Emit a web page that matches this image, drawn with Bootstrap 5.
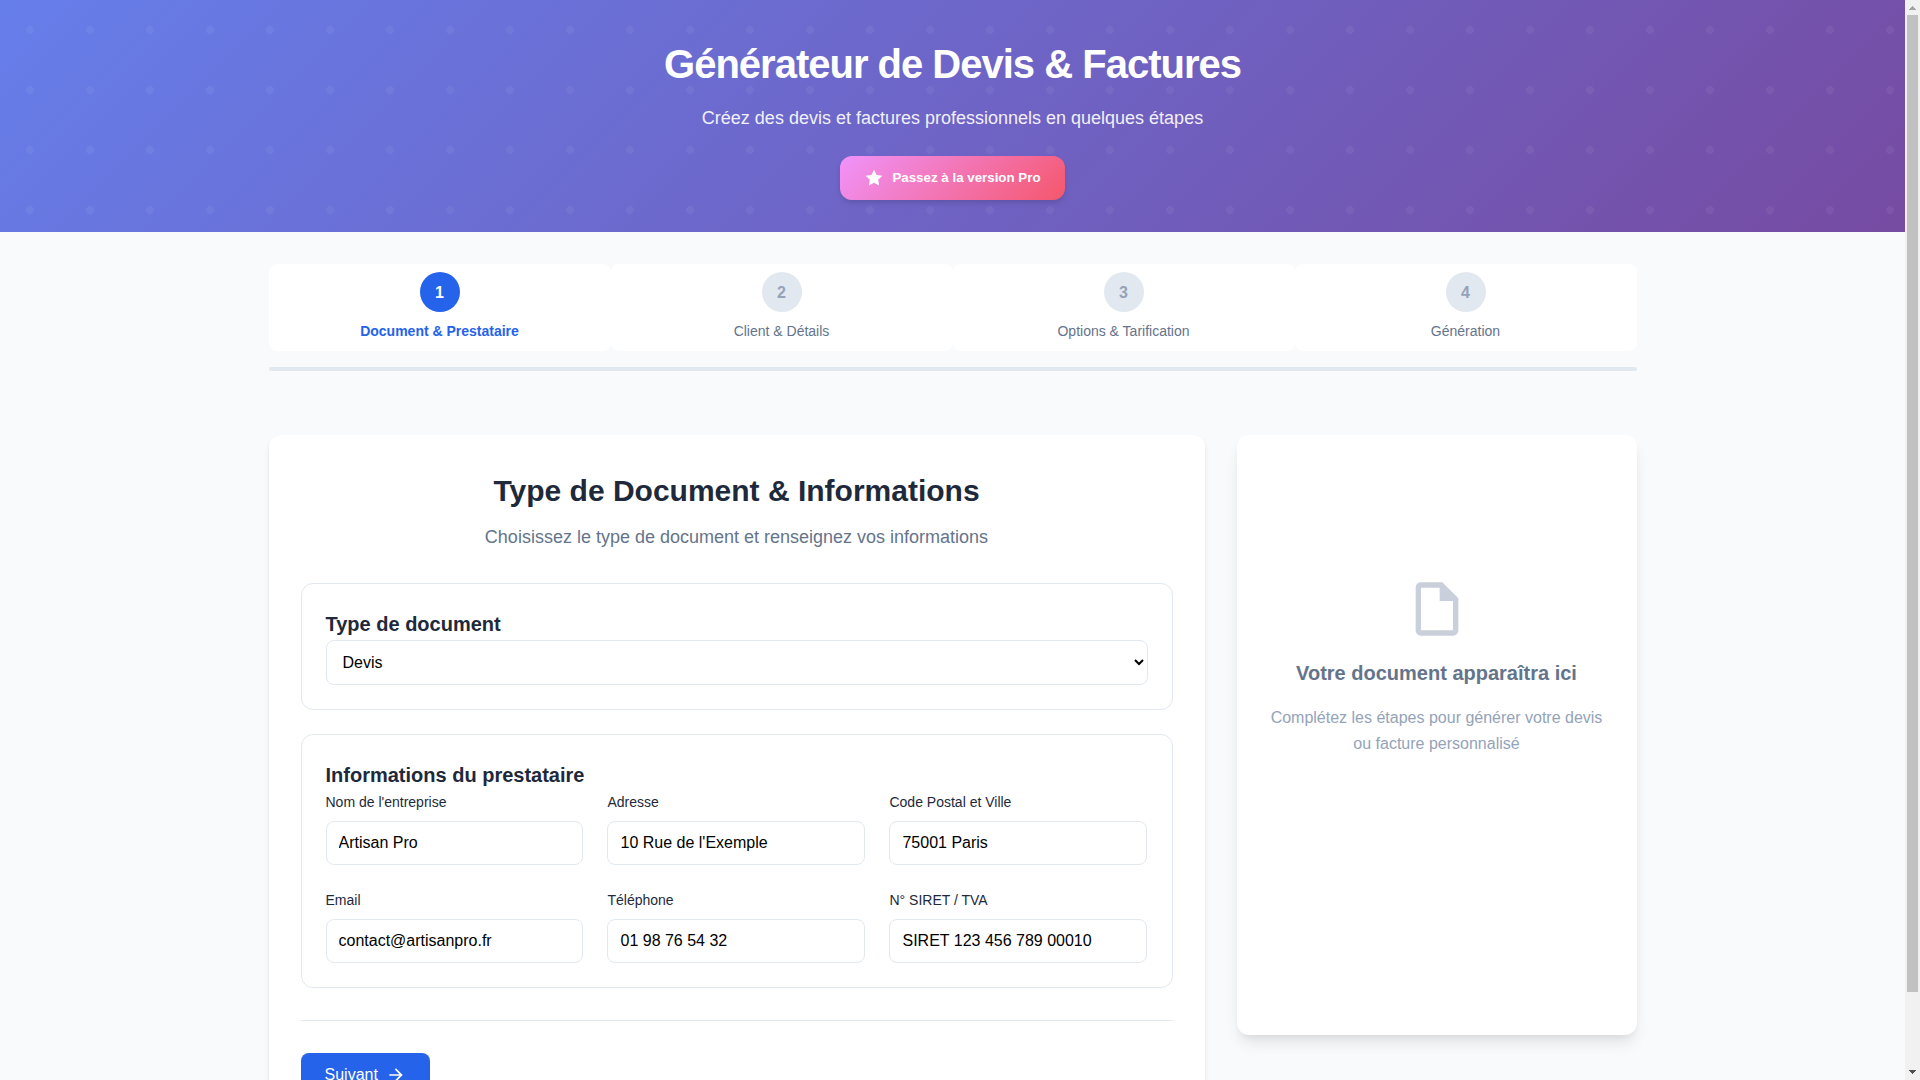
<!DOCTYPE html>
<html lang="fr">
<head>
<meta charset="utf-8">
<meta name="viewport" content="width=device-width, initial-scale=1">
<title>Générateur de Devis &amp; Factures</title>
<link href="https://cdn.jsdelivr.net/npm/bootstrap@5.3.0/dist/css/bootstrap.min.css" rel="stylesheet">
<style>
  html { scrollbar-width: none; }
  body { font-family: "Liberation Sans", Arial, sans-serif; background: #f8fafc; color: #1e293b; line-height: 1.6; }
  .hero {
    background:
      radial-gradient(circle at center, rgba(255, 255, 255, .05) 4px, transparent 4px) 0 0 / 60px 60px,
      linear-gradient(135deg, #667eea 0%, #764ba2 100%);
  }
  .hero h1 { font-size: 40px; line-height: 64px; font-weight: 700; letter-spacing: -1px; }
  .intro { font-size: 18px; line-height: 28px; }
  .hero .intro { opacity: .9; }
  .btn-pro {
    --bs-btn-color: #fff; --bs-btn-hover-color: #fff; --bs-btn-active-color: #fff;
    padding: 12px 24px; border: 0; border-radius: 12px;
    font-size: revert; font-weight: 600; line-height: 20px;
    background: linear-gradient(135deg, #f093fb 0%, #f5576c 100%);
    box-shadow: 0 4px 6px -1px rgba(0, 0, 0, .1), 0 2px 4px -1px rgba(0, 0, 0, .06);
  }
  .page-wrap { max-width: 1400px; }
  .step { background: #fff; border-radius: 8px; font-size: 14px; line-height: 23px; color: #64748b; }
  .step-num { width: 40px; height: 40px; border-radius: 50%; background: #e2e8f0; color: #94a3b8; font-size: 16px; font-weight: 600; }
  .step.current { color: #2563eb; font-weight: 600; }
  .step.current .step-num { background: #2563eb; color: #fff; }
  .track { height: 4px; border-radius: 2px; background: #e2e8f0; }
  .workspace { gap: 32px; }
  .panel { background: #fff; border-radius: 12px; padding: 32px; }
  .form-panel { box-shadow: 0 4px 6px -1px rgba(0, 0, 0, .1), 0 2px 4px -1px rgba(0, 0, 0, .06); }
  .preview-panel { min-height: 600px; box-shadow: 0 10px 15px -3px rgba(0, 0, 0, .1), 0 4px 6px -2px rgba(0, 0, 0, .05); }
  .preview-body { min-height: 400px; color: #94a3b8; }
  .preview-body h3 { color: #64748b; }
  .preview-body p { line-height: 26px; }
  .panel h2 { font-size: 30px; line-height: 48px; font-weight: 700; }
  .panel h3 { font-size: 20px; line-height: 32px; font-weight: 600; }
  .muted { color: #64748b; }
  .section-box { border: 1px solid #e2e8f0; border-radius: 12px; }
  .section-box label { font-size: 14px; line-height: 22px; }
  .field { width: 100%; padding: 12px; border: 1px solid #e2e8f0; border-radius: 8px; background: #fff; color: #000; font-size: 16px; line-height: normal; }
  .actions { border-top: 1px solid #e2e8f0; margin-top: 32px; padding-top: 32px; }
  .btn-next {
    --bs-btn-color: #fff; --bs-btn-bg: #2563eb; --bs-btn-hover-color: #fff; --bs-btn-hover-bg: #1d4ed8;
    padding: 12px 24px; border: 0; border-radius: 8px; line-height: 20px;
  }
  .scroll-rail { width: 15px; background: #f1f1f1; }
  .scroll-thumb { width: 11px; height: 93%; background: #c1c1c1; }
  @media (min-width: 1200px) { .preview-panel { flex: 0 0 400px; } }
</style>
</head>
<body class="d-flex align-items-start">
<div class="flex-grow-1">
<header class="hero text-white text-center py-4">
  <div class="page-wrap mx-auto px-3 py-2">
    <h1 class="mb-2">Générateur de Devis &amp; Factures</h1>
    <p class="intro mb-4">Créez des devis et factures professionnels en quelques étapes</p>
    <button type="button" class="btn btn-pro d-inline-flex align-items-center gap-2 align-top">
      <svg width="20" height="20" viewBox="0 0 24 24" fill="currentColor" aria-hidden="true"><path d="M12 2l3.09 6.26L22 9.27l-5 4.87 1.18 6.88L12 17.77l-6.18 3.25L7 14.14 2 9.27l6.91-1.01L12 2z"/></svg>
      Passez à la version Pro
    </button>
  </div>
</header>

<main class="page-wrap mx-auto px-3 py-4">
  <nav class="pt-2 mb-5 pb-3" aria-label="Étapes">
    <ol class="list-unstyled row g-0 text-center mb-3">
      <li class="col step current p-2 d-flex flex-column align-items-center gap-2" aria-current="step"><span class="step-num d-flex align-items-center justify-content-center">1</span><span>Document &amp; Prestataire</span></li>
      <li class="col step p-2 d-flex flex-column align-items-center gap-2"><span class="step-num d-flex align-items-center justify-content-center">2</span><span>Client &amp; Détails</span></li>
      <li class="col step p-2 d-flex flex-column align-items-center gap-2"><span class="step-num d-flex align-items-center justify-content-center">3</span><span>Options &amp; Tarification</span></li>
      <li class="col step p-2 d-flex flex-column align-items-center gap-2"><span class="step-num d-flex align-items-center justify-content-center">4</span><span>Génération</span></li>
    </ol>
    <div class="track"></div>
  </nav>

  <div class="workspace d-flex flex-column flex-xl-row align-items-xl-start mb-2">
    <form class="panel form-panel flex-grow-1">
      <div class="text-center mb-4 pb-2">
        <h2 class="mb-2">Type de Document &amp; Informations</h2>
        <p class="intro muted mb-0">Choisissez le type de document et renseignez vos informations</p>
      </div>

      <section class="section-box p-4 mb-4">
        <h3 class="mb-0" id="doc-type">Type de document</h3>
        <select class="field d-block" aria-labelledby="doc-type">
          <option selected>Devis</option>
          <option>Facture</option>
        </select>
      </section>

      <section class="section-box p-4">
        <h3 class="mb-0">Informations du prestataire</h3>
        <div class="row g-4">
          <div class="col-md-4"><label class="d-block mb-2" for="company">Nom de l'entreprise</label><input class="field d-block" id="company" type="text" value="Artisan Pro"></div>
          <div class="col-md-4"><label class="d-block mb-2" for="address">Adresse</label><input class="field d-block" id="address" type="text" value="10 Rue de l'Exemple"></div>
          <div class="col-md-4"><label class="d-block mb-2" for="city">Code Postal et Ville</label><input class="field d-block" id="city" type="text" value="75001 Paris"></div>
          <div class="col-md-4"><label class="d-block mb-2" for="email">Email</label><input class="field d-block" id="email" type="email" value="contact@artisanpro.fr"></div>
          <div class="col-md-4"><label class="d-block mb-2" for="phone">Téléphone</label><input class="field d-block" id="phone" type="tel" value="01 98 76 54 32"></div>
          <div class="col-md-4"><label class="d-block mb-2" for="siret">N° SIRET / TVA</label><input class="field d-block" id="siret" type="text" value="SIRET 123 456 789 00010"></div>
        </div>
      </section>

      <div class="actions">
        <button type="button" class="btn btn-next d-inline-flex align-items-center gap-2 align-top">Suivant
          <svg width="20" height="20" viewBox="0 0 24 24" fill="currentColor" aria-hidden="true"><path d="M12 4l-1.410 1.410L16.170 11H4v2h12.170l-5.580 5.590L12 20l8-8z"/></svg>
        </button>
      </div>
    </form>

    <aside class="panel preview-panel">
      <div class="preview-body d-flex flex-column align-items-center justify-content-center text-center">
        <svg class="mb-3" width="64" height="64" viewBox="0 0 24 24" fill="currentColor" opacity=".5" aria-hidden="true"><path d="M14 2H6c-1.100 0-1.990.9-1.990 2L4 20c0 1.100.89 2 1.990 2H18c1.100 0 2-.9 2-2V8l-6-6zM6 20V4h7v5h5v11H6z"/></svg>
        <h3 class="mb-3">Votre document apparaîtra ici</h3>
        <p class="mb-0">Complétez les étapes pour générer votre devis ou facture personnalisé</p>
      </div>
    </aside>
  </div>
</main>
</div>

<div class="scroll-rail sticky-top vh-100 flex-shrink-0 d-flex flex-column align-items-center" aria-hidden="true">
  <svg class="flex-shrink-0" width="15" height="15" viewBox="0 0 15 15" fill="#a3a3a3" shape-rendering="crispEdges"><path d="M7 6h1v1h1v1h1v1h1v1H4V9h1V8h1V7h1z"/></svg>
  <div class="flex-grow-1 w-100 d-flex justify-content-center"><div class="scroll-thumb"></div></div>
  <svg class="flex-shrink-0" width="15" height="15" viewBox="0 0 15 15" fill="#505050" shape-rendering="crispEdges"><path d="M4 5h7v1h-1v1H9v1H8v1H7V8H6V7H5V6H4z"/></svg>
</div>
<script src="https://cdn.jsdelivr.net/npm/bootstrap@5.3.0/dist/js/bootstrap.bundle.min.js"></script>
</body>
</html>
